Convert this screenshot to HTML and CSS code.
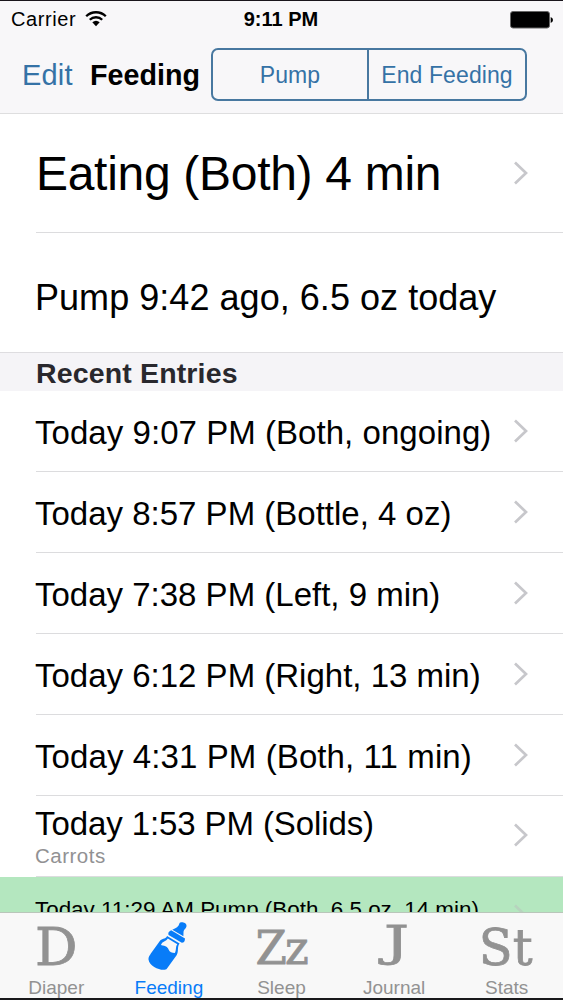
FILE: index.html
```html
<!DOCTYPE html>
<html lang="en">
<head>
<meta charset="utf-8">
<title>Feeding</title>
<link rel="stylesheet" href="styles.css">
</head>
<body>
<div class="phone">
  <header class="top">
    <div class="status">
      <div class="carrier"><span>Carrier</span>
        <svg class="wifi" width="22" height="16" viewBox="0 0 22 16"><path d="M1.2 5.2C6.6-.1 15.4-.1 20.8 5.2M4.8 8.8C8.2 5.4 13.8 5.4 17.2 8.8" fill="none" stroke="#000" stroke-width="2.3"/><path d="M7.3 11.2Q11 8.2 14.7 11.2L11 15.2Z"/></svg>
      </div>
      <div class="time">9:11 PM</div>
      <svg class="battery" width="44" height="18" viewBox="0 0 44 18"><rect x="1.5" y=".5" width="39" height="16.5" rx="2.5" fill="#000" stroke="#666"/><path d="M41.7 6Q44 7 44 9T41.7 12Z"/></svg>
    </div>
    <nav class="nav">
      <a class="edit">Edit</a>
      <h1 class="title">Feeding</h1>
      <div class="segments"><a class="segment pump">Pump</a><a class="segment end">End Feeding</a></div>
    </nav>
  </header>
  <main class="content">
    <div class="row tall"><span class="eating">Eating (Both) 4 min</span><svg class="chevron" width="16" height="26" viewBox="0 0 16 26"><path d="M2 2.5 13 13 2 23.5"/></svg></div>
    <div class="row tall last"><span class="summary">Pump 9:42 ago, 6.5 oz today</span></div>
    <h2 class="section">Recent Entries</h2>
    <div class="row"><span class="e1">Today 9:07 PM (Both, ongoing)</span><svg class="chevron" width="16" height="26" viewBox="0 0 16 26"><path d="M2 2.5 13 13 2 23.5"/></svg></div>
    <div class="row"><span class="e2">Today 8:57 PM (Bottle, 4 oz)</span><svg class="chevron" width="16" height="26" viewBox="0 0 16 26"><path d="M2 2.5 13 13 2 23.5"/></svg></div>
    <div class="row"><span class="e3">Today 7:38 PM (Left, 9 min)</span><svg class="chevron" width="16" height="26" viewBox="0 0 16 26"><path d="M2 2.5 13 13 2 23.5"/></svg></div>
    <div class="row"><span class="e4">Today 6:12 PM (Right, 13 min)</span><svg class="chevron" width="16" height="26" viewBox="0 0 16 26"><path d="M2 2.5 13 13 2 23.5"/></svg></div>
    <div class="row"><span class="e5">Today 4:31 PM (Both, 11 min)</span><svg class="chevron" width="16" height="26" viewBox="0 0 16 26"><path d="M2 2.5 13 13 2 23.5"/></svg></div>
    <div class="row"><div class="stack"><span>Today 1:53 PM (Solids)</span><small>Carrots</small></div><svg class="chevron" width="16" height="26" viewBox="0 0 16 26"><path d="M2 2.5 13 13 2 23.5"/></svg></div>
    <div class="row green"><span>Today 11:29 AM Pump (Both, 6.5 oz, 14 min)</span><svg class="chevron" width="16" height="26" viewBox="0 0 16 26"><path d="M2 2.5 13 13 2 23.5"/></svg></div>
  </main>
  <footer class="tabs">
    <a class="tab"><span class="glyph d">D</span><span class="label">Diaper</span></a>
    <a class="tab active"><svg class="bottle" width="40" height="50" viewBox="0 0 40 50">
      <g fill="currentColor"><path d="M31.5 2.3C32.4.4 38.5 1.4 38.5 4.7 38.5 7.5 35.6 8.2 35.5 11.1L35.4 15.3 24.3 8.7C28 7.4 30.8 5.6 31.5 2.3Z"/><path d="M23.2 9.2 37 17.4Q37 21.6 33.8 21.8L20.6 13.9Q19.4 11 23.2 9.2Z"/><path fill-rule="evenodd" d="M19.1 15.1 31.6 22.5C28.8 25.8 31 30.4 28.6 34.3L19 47.4C16.5 51.5 1.5 46.4.5 38.5.2 36.5 1.7 34.3 3 32.3L11.3 20.8C13.6 17.1 17.2 18.8 19.1 15.1ZM19.8 17.6C18 20.7 15.2 20 13.6 22.8L12.9 24.1C18 25.2 20 26.3 20.8 29.1 21.5 31.2 24 32 26.8 32.1 28.6 29.1 27.2 25.9 29.3 23.2Z"/></g></svg><span class="label">Feeding</span></a>
    <a class="tab"><span class="glyph z">Zz</span><span class="label">Sleep</span></a>
    <a class="tab"><span class="glyph j">J</span><span class="label">Journal</span></a>
    <a class="tab"><span class="glyph s">St</span><span class="label">Stats</span></a>
  </footer>
</div>
</body>
</html>
```

FILE: styles.css
```css
* { box-sizing: border-box; }
body { margin: 0; font-family: "Liberation Sans", Arial, sans-serif; color: #000; }
.phone { width: 563px; height: 1000px; display: flex; flex-direction: column; background: #fff; overflow: hidden; border-top: 1px solid #19151c; border-bottom: 2px solid #19191b; white-space: nowrap; }
.top { height: 113px; flex: none; background: #f8f7f9; border-bottom: 1px solid #dededf; }
.status { height: 37px; display: grid; grid-template-columns: 1fr auto 1fr; align-items: center; padding: 0 10px 0 11px; font-size: 20px; }
.carrier { display: flex; gap: 9px; align-items: center; letter-spacing: .6px; }
.wifi { margin-top: -2px; }
.time { font-weight: bold; font-size: 20px; margin-right: 2px; }
.battery { justify-self: end; }
.nav { display: flex; height: 75px; padding: 10px 36px 13px 22px; align-items: center; }
.edit { width: 68px; padding-top: 3px; font-size: 29px; color: #3572a6; letter-spacing: .2px; }
.title { margin: 0; padding-top: 3px; width: 121px; font-size: 28.7px; }
.segments { flex: 1; height: 53px; display: flex; border: 2px solid #4878a0; border-radius: 7px; font-size: 23px; color: #3572a6; }
.segment { display: flex; align-items: center; justify-content: center; padding-top: 3px; letter-spacing: .1px; }
.pump { width: 156px; border-right: 2px solid #4878a0; }
.end { flex: 1; }
.content { flex: 1; min-height: 0; overflow: hidden; }
.row { height: 81px; margin-left: 36px; padding: 2px 34px 0 0; border-bottom: 1px solid #dcdcde; display: flex; align-items: center; justify-content: space-between; font-size: 33px; }
.row > span { margin: 2px 0 0 -1px; }
.chevron { margin-top: -2px; flex: none; fill: none; stroke: #c7c7cb; stroke-width: 2.7; }
.tall { height: 119px; padding-top: 1px; }
.last { height: 119px; padding-top: 8px; border: 0; font-size: 36px; }
.summary { letter-spacing: .04px; }
.row > .eating { margin: 0; font-size: 48px; letter-spacing: -.3px; }
.e1 { letter-spacing: .05px; }
.e5 { letter-spacing: .1px; }
.section { height: 39px; margin: 0; padding: 3px 0 0 36px; background: #f5f4f7; border-top: 1px solid #dedde0; font-size: 28.5px; line-height: 35px; letter-spacing: .15px; color: #29282d; }
.stack { display: flex; flex-direction: column; margin: 3px 0 0 -1px; }
.stack span { line-height: 35px; letter-spacing: -.1px; }
.stack small { font-size: 20.5px; line-height: 30px; color: #919193; letter-spacing: .5px; }
.stack + .chevron { margin-top: -4px; }
.green { margin-left: 0; padding-left: 36px; height: 66px; background: #b4e7bf; font-size: 22.4px; }
.row.green > span { margin-top: -2px; }
.green .chevron { margin-top: 11px; stroke: #b7d3be; }
.tabs { height: 86px; flex: none; display: grid; grid-template-columns: repeat(5, 1fr); background: #f8f8f8; border-top: 1px solid #b9c6ba; color: #929292; }
.tab { display: flex; flex-direction: column; align-items: center; }
.active { color: #087cf8; }
.glyph { height: 64px; line-height: 64px; font-family: "DejaVu Serif", serif; font-size: 53px; -webkit-text-stroke: .8px #929292; }
.d { line-height: 67px; }
.z { font-size: 46px; line-height: 71px; letter-spacing: -2px; transform: scaleX(.98); }
.j { font-size: 43px; line-height: 57px; transform: translateX(3px) scaleX(1.45); }
.s { font-size: 51px; line-height: 69px; transform: translateX(-1px) scaleX(.97); }
.label { font-size: 19px; line-height: 22px; }
.bottle { margin: 8px 2px 6px 0; }
```
